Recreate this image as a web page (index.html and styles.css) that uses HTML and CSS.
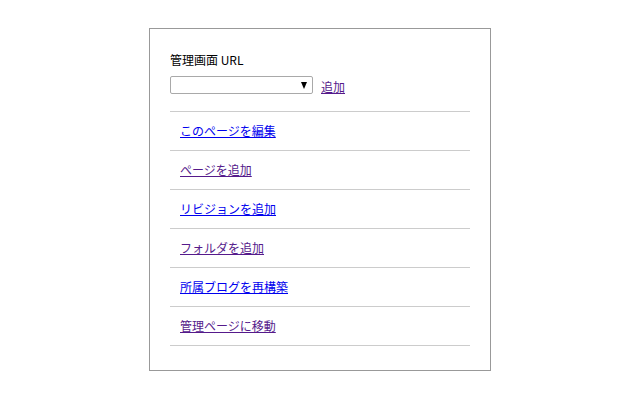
FILE: index.html
```html
<!DOCTYPE html>
<html lang="ja">
<head>
<meta charset="utf-8">
<link rel="stylesheet" href="styles.css">
</head>
<body>
<div class="box">
  <div class="label">管理画面 URL</div>
  <div class="url-row">
    <span class="select-wrap">
      <select class="url-select"><option></option></select>
      <span class="arrow"></span>
    </span>
    <a href="#" class="link visited">追加</a>
  </div>
  <ul class="menu">
    <li><a href="#" class="link">このページを編集</a></li>
    <li><a href="#" class="link visited">ページを追加</a></li>
    <li><a href="#" class="link">リビジョンを追加</a></li>
    <li><a href="#" class="link visited">フォルダを追加</a></li>
    <li><a href="#" class="link">所属ブログを再構築</a></li>
    <li><a href="#" class="link visited">管理ページに移動</a></li>
  </ul>
</div>
</body>
</html>
```
FILE: styles.css
```css
html, body {
  margin: 0;
  padding: 0;
  background: #fff;
}
body {
  font-family: "Noto Sans CJK JP", "Noto Sans", sans-serif;
  font-size: 12px;
  color: #000;
  padding-top: 28px;
}
.box {
  width: 300px;
  margin: 0 auto;
  border: 1px solid #999;
  padding: 23px 20px 24px 20px;
}
.label {
  line-height: 16px;
  height: 16px;
}
.url-row {
  display: flex;
  align-items: center;
  gap: 8px;
  margin-top: 8px;
  height: 18px;
}
.select-wrap {
  position: relative;
  display: block;
  width: 143px;
  height: 18px;
}
.url-select {
  appearance: none;
  -webkit-appearance: none;
  display: block;
  box-sizing: border-box;
  width: 143px;
  height: 18px;
  margin: 0;
  padding: 0 4px;
  border: 1px solid #a9a9a9;
  border-radius: 2px;
  background: #fff;
  font-family: inherit;
  font-size: 12px;
}
.arrow {
  position: absolute;
  right: 6px;
  top: 6px;
  width: 0;
  height: 0;
  border-left: 3.5px solid transparent;
  border-right: 3.5px solid transparent;
  border-top: 7px solid #000;
}
.link {
  color: #0000ee;
  text-decoration: underline;
  font-size: 12px;
  line-height: 16px;
}
.link.visited {
  color: #551a8b;
}
.url-row .link {
  margin-top: 3px;
}
.menu {
  list-style: none;
  margin: 17px 0 0 0;
  padding: 0;
  border-top: 1px solid #ccc;
}
.menu li {
  box-sizing: border-box;
  height: 38px;
  display: flex;
  align-items: center;
  padding-left: 10px;
  padding-bottom: 1px;
  border-bottom: 1px solid #ccc;
  box-sizing: content-box;
  height: 37px;
}
```
